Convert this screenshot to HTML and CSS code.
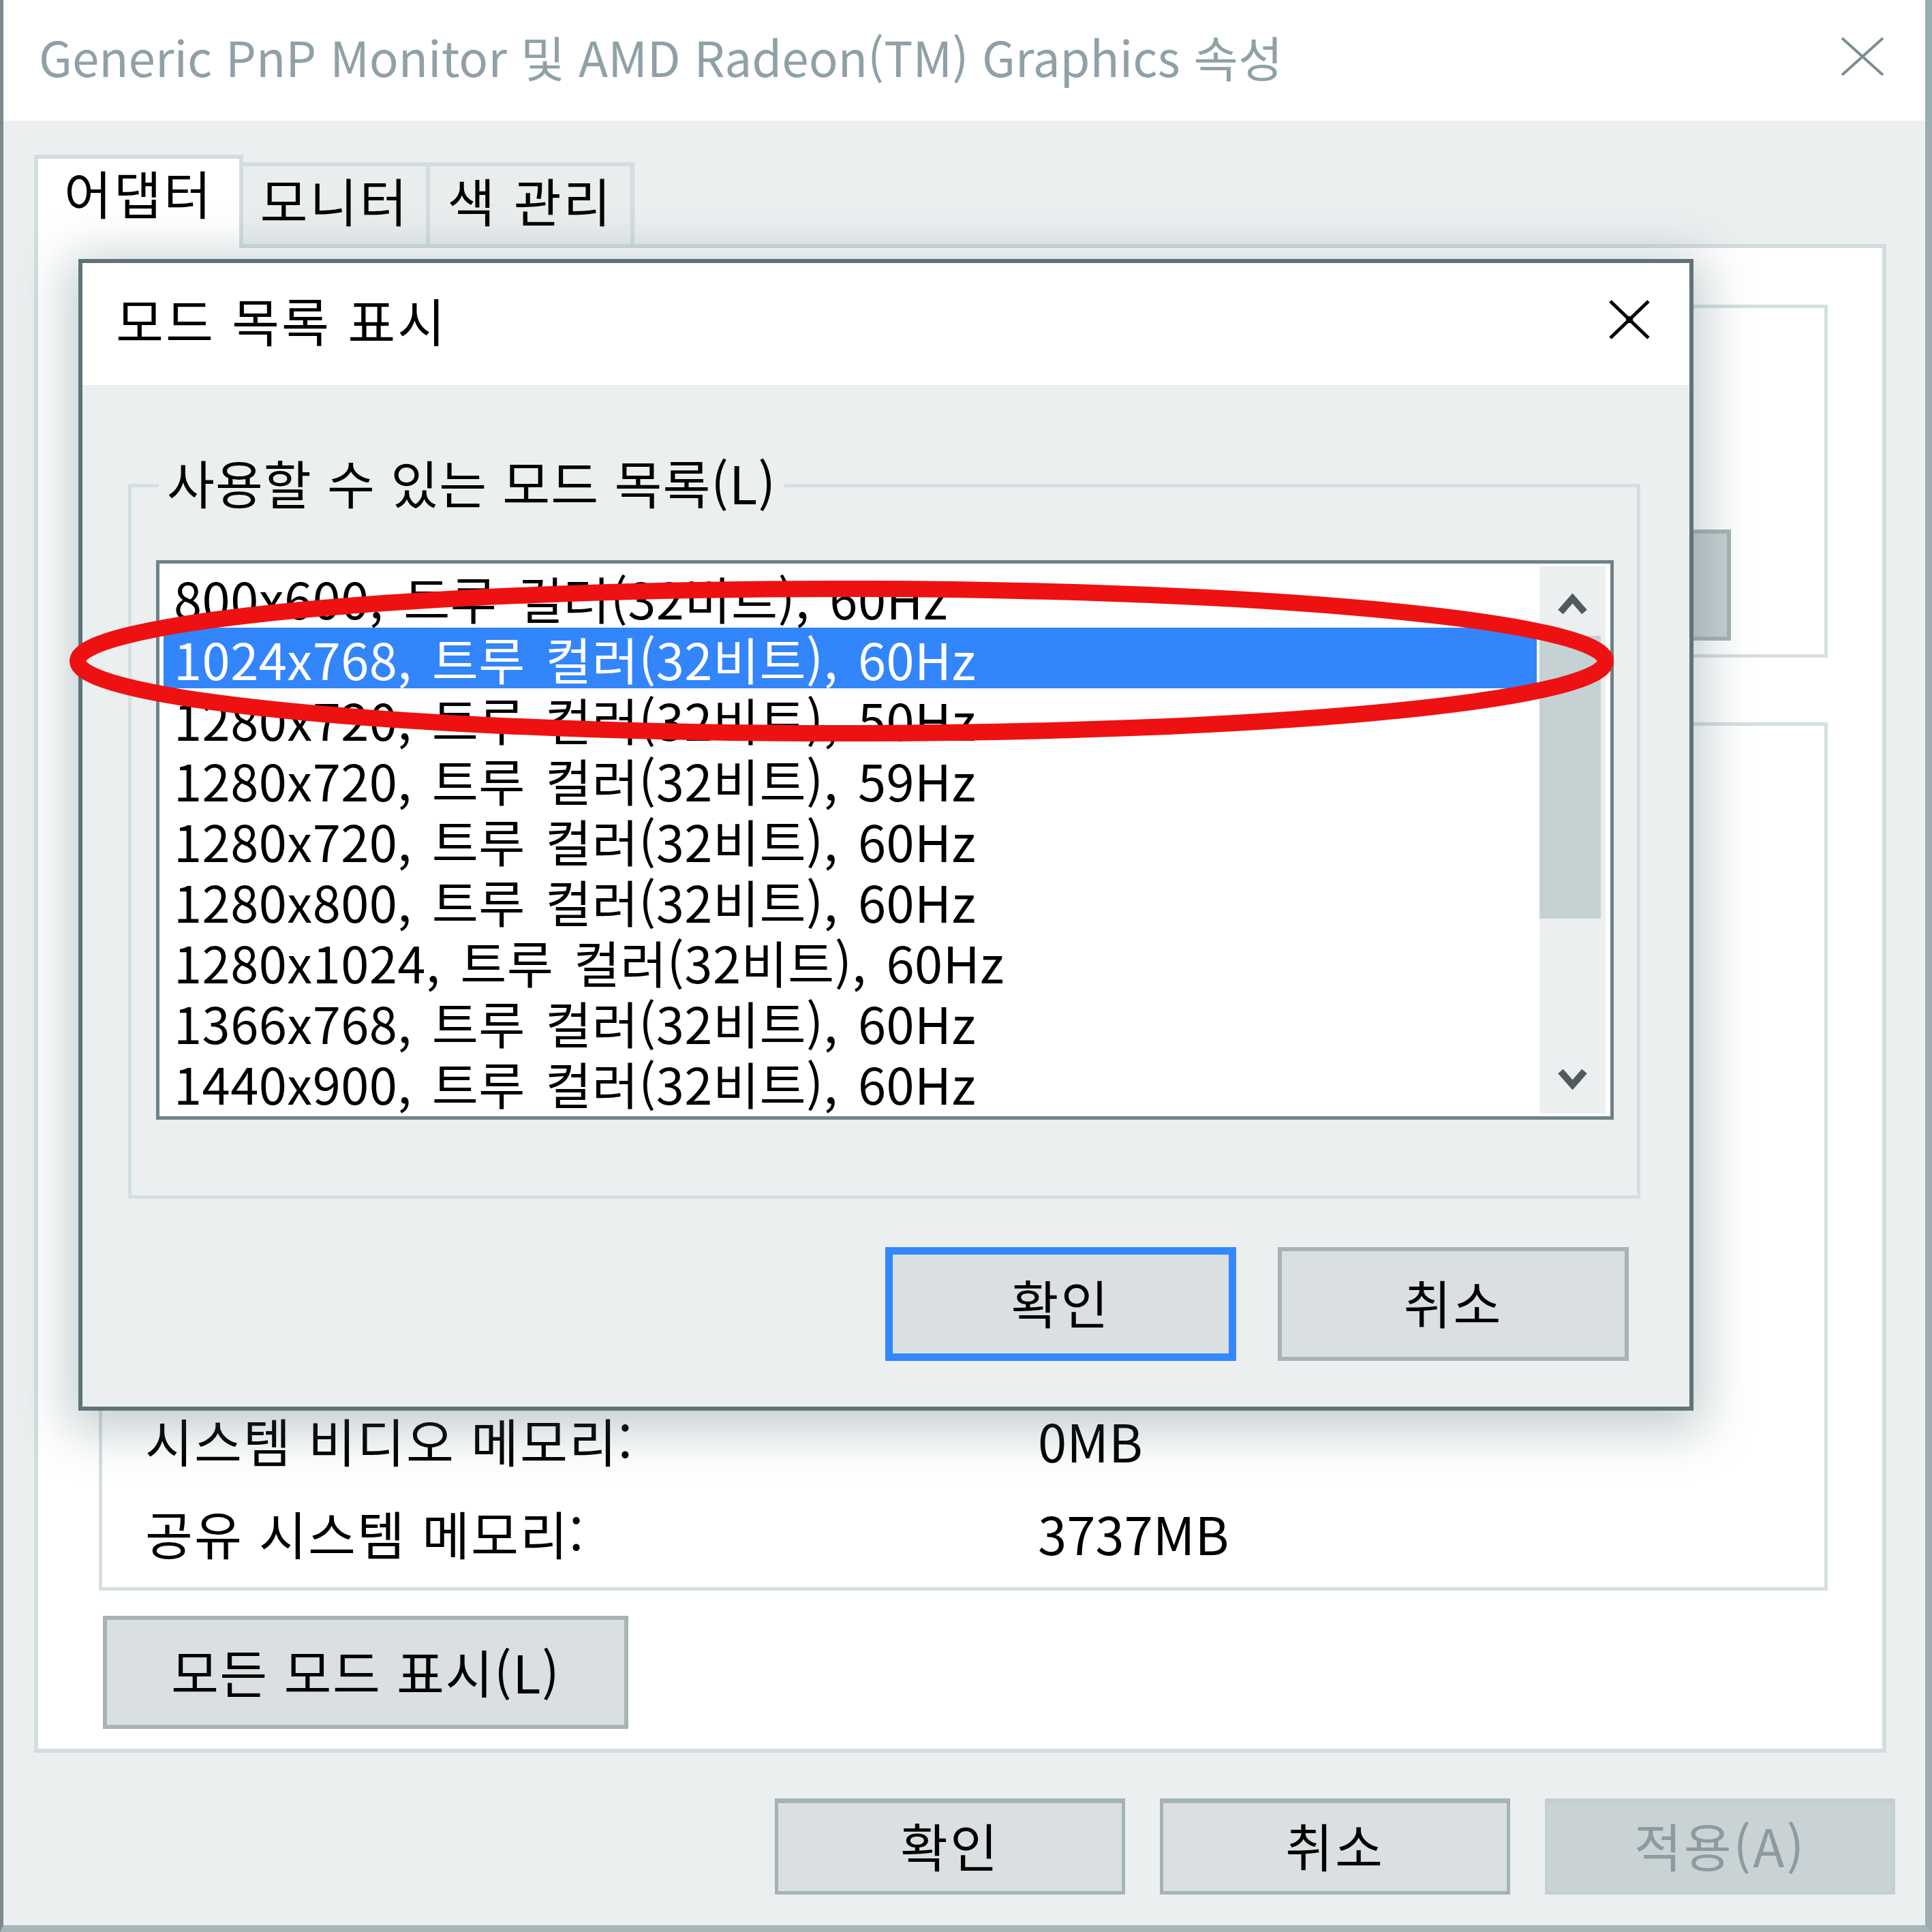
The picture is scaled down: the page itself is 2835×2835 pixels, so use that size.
FILE: index.html
```html
<!DOCTYPE html>
<html lang="ko">
<head>
<meta charset="utf-8">
<title>Generic PnP Monitor 및 AMD Radeon(TM) Graphics 속성</title>
<link rel="stylesheet" href="styles.css">
</head>
<body>
<div class="window">
  <header class="titlebar">
    <span class="title">Generic PnP Monitor 및 AMD Radeon(TM) Graphics 속성</span>
    <svg class="win-close" viewBox="0 0 66 58" width="66" height="58"><path d="M3 2 L63 56 M63 2 L3 56" stroke="#7a8e93" stroke-width="4" fill="none"/></svg>
  </header>
  <div class="client">
    <div class="tabs">
      <div class="tab active">어댑터</div>
      <div class="tab t2">모니터</div>
      <div class="tab t3">색 관리</div>
    </div>
    <div class="panel">
      <section class="group g1">
        <div class="btn props">속성(P)</div>
      </section>
      <section class="group g2">
        <div class="info-row"><span class="lbl">시스템 비디오 메모리:</span><span class="val">0MB</span></div>
        <div class="info-row"><span class="lbl">공유 시스템 메모리:</span><span class="val">3737MB</span></div>
      </section>
      <div class="btn list-all">모든 모드 표시(L)</div>
    </div>
    <div class="footer">
      <div class="btn foot">확인</div>
      <div class="btn foot">취소</div>
      <div class="btn foot disabled">적용(A)</div>
    </div>
  </div>

  <div class="dialog">
    <div class="dlg-head">
      <span class="dlg-title">모드 목록 표시</span>
      <svg class="dlg-close" viewBox="0 0 60 58" width="60" height="58"><path d="M2 2 L58 56 M58 2 L2 56" stroke="#000" stroke-width="5" fill="none"/><rect x="25" y="24" width="10" height="10" fill="#000"/></svg>
    </div>
    <div class="dlg-body">
      <div class="dlg-group">
        <span class="legend">사용할 수 있는 모드 목록(L)</span>
        <div class="listbox">
          <div class="rows">
            <div class="row">800x600, 트루 컬러(32비트), 60Hz</div>
            <div class="row selected">1024x768, 트루 컬러(32비트), 60Hz</div>
            <div class="row">1280x720, 트루 컬러(32비트), 50Hz</div>
            <div class="row">1280x720, 트루 컬러(32비트), 59Hz</div>
            <div class="row">1280x720, 트루 컬러(32비트), 60Hz</div>
            <div class="row">1280x800, 트루 컬러(32비트), 60Hz</div>
            <div class="row">1280x1024, 트루 컬러(32비트), 60Hz</div>
            <div class="row">1366x768, 트루 컬러(32비트), 60Hz</div>
            <div class="row">1440x900, 트루 컬러(32비트), 60Hz</div>
          </div>
          <div class="scrollbar">
            <div class="sb-btn up"><svg viewBox="0 0 43 33" width="43" height="33"><polyline points="4,30 21.5,10 39,30" stroke="#4f5b5e" stroke-width="10" fill="none"/></svg></div>
            <div class="sb-thumb"></div>
            <div class="sb-space"></div>
            <div class="sb-btn down"><svg viewBox="0 0 43 33" width="43" height="33"><polyline points="4,3 21.5,23 39,3" stroke="#4f5b5e" stroke-width="10" fill="none"/></svg></div>
          </div>
        </div>
      </div>
      <div class="dlg-buttons">
        <div class="btn dlg-btn default">확인</div>
        <div class="btn dlg-btn">취소</div>
      </div>
    </div>
  </div>

  <svg class="mark" viewBox="0 0 2835 2835" width="2835" height="2835"><ellipse cx="1235" cy="970" rx="1121" ry="106" fill="none" stroke="#ee1111" stroke-width="24"/></svg>
</div>
</body>
</html>
```

FILE: styles.css
```css
* { box-sizing: border-box; }
html, body { margin: 0; padding: 0; }
body {
  width: 2835px;
  height: 2835px;
  overflow: hidden;
  background: #ffffff;
  font-family: "Noto Sans CJK KR", "Noto Sans", sans-serif;
  font-size: 76px;
  letter-spacing: 3px;
  color: #000;
}

.window {
  position: relative;
  width: 2835px;
  height: 2835px;
  border-left: 5px solid #7d898c;
  border-right: 10px solid #9aacaf;
  border-bottom: 10px solid #a6b7ba;
  background: #ebeff0;
  display: flex;
  flex-direction: column;
}

.titlebar {
  height: 177px;
  flex: none;
  background: #fff;
  display: flex;
  align-items: center;
  justify-content: space-between;
  padding: 0 59px 12px 52px;
}
.title {
  color: #8fa1a6;
  line-height: 1;
  font-size: 71px;
  letter-spacing: 0;
}
.win-close { display: block; }

.client {
  flex: 1;
  display: flex;
  flex-direction: column;
  padding: 50px 0 0 45px;
}

.tabs {
  display: flex;
  align-items: flex-end;
  height: 131px;
  flex: none;
  position: relative;
  z-index: 1;
}
.tab {
  height: 120px;
  border: 6px solid #d3dcde;
  border-bottom: none;
  background: #e9edee;
  display: flex;
  align-items: center;
  justify-content: center;
  line-height: 1;
  padding-bottom: 16px;
}
.tab.active {
  width: 307px;
  height: 137px;
  background: #fff;
  margin-bottom: -6px;
  padding-bottom: 34px;
  position: relative;
  z-index: 2;
}
.tab.t2 { width: 280px; margin-left: -6px; }
.tab.t3 { width: 306px; margin-left: -6px; }

.panel {
  flex: none;
  margin-right: 57px;
  height: 2214px;
  border: 6px solid #d3dcde;
  background: #fff;
  padding: 83px 80px 0 89px;
  display: flex;
  flex-direction: column;
}

.group {
  border: 5px solid #d5dfe1;
  flex: none;
}
.g1 {
  height: 518px;
  display: flex;
  justify-content: flex-end;
  align-items: flex-start;
  padding: 325px 137px 0 0;
}
.g2 {
  margin-top: 95px;
  height: 1274px;
  display: flex;
  flex-direction: column;
  justify-content: flex-end;
  padding: 0 0 10px 63px;
}
.info-row {
  height: 136px;
  display: flex;
  align-items: center;
  line-height: 1;
  padding-bottom: 4px;
}
.info-row .lbl { width: 1310px; letter-spacing: 2px; }
.info-row .val { letter-spacing: 0; }

.btn {
  display: flex;
  align-items: center;
  justify-content: center;
  background: #dae0e1;
  border: 6px solid #a7b3b5;
  line-height: 1;
}
.props {
  width: 520px;
  height: 163px;
  background: #c6d0d2;
}
.list-all {
  margin: 37px 0 0 6px;
  width: 771px;
  height: 166px;
  padding-bottom: 4px;
  letter-spacing: 1.5px;
}

.footer {
  display: flex;
  justify-content: flex-end;
  gap: 51px;
  margin-top: 67px;
  padding-right: 44px;
}
.foot {
  width: 514px;
  height: 141px;
  border-width: 5px;
  border-top-width: 7px;
  border-color: #a5b3b5;
  padding-bottom: 8px;
}
.foot.disabled {
  background: #c9d3d5;
  border-color: #c3cfd1;
  color: #8d9b9e;
}

/* modal dialog */
.dialog {
  position: absolute;
  left: 110px;
  top: 380px;
  width: 2370px;
  height: 1690px;
  border: 6px solid #5f7378;
  background: #ebeff0;
  display: flex;
  flex-direction: column;
  box-shadow: 0 14px 70px 14px rgba(70, 100, 106, 0.33);
  z-index: 5;
}
.dlg-head {
  height: 179px;
  flex: none;
  background: #fff;
  display: flex;
  align-items: center;
  justify-content: space-between;
  padding: 0 58px 14px 49px;
}
.dlg-title { line-height: 1; letter-spacing: 3px; }
.dlg-close { display: block; }

.dlg-body {
  flex: 1;
  display: flex;
  flex-direction: column;
  padding: 145px 72px 67px 67px;
}
.dlg-group {
  position: relative;
  height: 1049px;
  flex: none;
  border: 5px solid #d4dfe1;
  padding: 107px 34px 0 36px;
}
.legend {
  position: absolute;
  left: 40px;
  top: -53px;
  padding: 0 12px;
  line-height: 90px;
  background: #ebeff0;
  letter-spacing: 1px;
}

.listbox {
  height: 821px;
  border: 5px solid #6e8188;
  background: #fff;
  display: flex;
  padding: 4px 7px 4px 6px;
}
.rows {
  flex: 1;
  margin-right: 4px;
  padding-top: 1px;
  overflow: hidden;
  font-size: 74px;
  letter-spacing: 0.5px;
  word-spacing: 8px;
}
.row {
  height: 89px;
  line-height: 89px;
  padding-left: 15px;
  white-space: nowrap;
}
.row.selected {
  background: #3385fb;
  color: #fff;
}

.scrollbar {
  width: 97px;
  background: #eceff0;
  display: flex;
  flex-direction: column;
}
.sb-btn {
  display: flex;
  align-items: center;
  justify-content: center;
  flex: none;
}
.sb-btn svg { display: block; }
.sb-btn.up { height: 102px; padding-top: 4px; }
.sb-btn.down { height: 98px; }
.sb-thumb {
  width: 90px;
  height: 415px;
  background: #c5d1d3;
  flex: none;
}
.sb-space { flex: 1; }

.dlg-buttons {
  margin-top: 71px;
  display: flex;
  justify-content: flex-end;
  gap: 61px;
  padding-right: 17px;
}
.dlg-btn {
  width: 515px;
  height: 167px;
  padding-bottom: 8px;
}
.dlg-btn.default {
  border: 11px solid #3388ff;
}

.mark {
  position: absolute;
  left: -5px;
  top: 0;
  z-index: 10;
  pointer-events: none;
}
```
